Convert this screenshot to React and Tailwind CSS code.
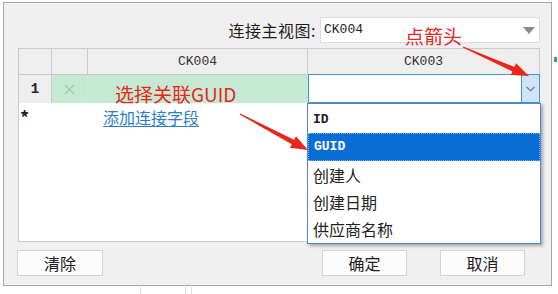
import React from "react";

function arrowPts(x1, y1, x2, y2, headLen = 17, headW = 13, neckW = 5, tailW = 1.2) {
  const dx = x2 - x1, dy = y2 - y1;
  const len = Math.hypot(dx, dy);
  const ux = dx / len, uy = dy / len;
  const px = -uy, py = ux;
  const bx = x2 - ux * headLen, by = y2 - uy * headLen;
  const pts = [
    [x1 + px * tailW / 2, y1 + py * tailW / 2],
    [bx + px * neckW / 2, by + py * neckW / 2],
    [bx + px * headW / 2, by + py * headW / 2],
    [x2, y2],
    [bx - px * headW / 2, by - py * headW / 2],
    [bx - px * neckW / 2, by - py * neckW / 2],
    [x1 - px * tailW / 2, y1 - py * tailW / 2],
  ];
  return pts.map((p) => p[0].toFixed(1) + "," + p[1].toFixed(1)).join(" ");
}

const cjk = "font-['Noto_Sans_CJK_SC','Noto_Sans',sans-serif]";
const mono = "font-['Liberation_Mono','Noto_Sans_CJK_SC',monospace]";

export default function App() {
  return (
    <div className={`relative w-[558px] h-[294px] bg-white overflow-hidden ${cjk}`}>
      <div className="ml-[3px] mt-[2px] w-[549px] h-[284px] border border-[#a8a8a8] bg-[#f0f0f0] flex flex-col pl-[14px] pr-[11px] pt-[14px]">
        {/* top row */}
        <div className="flex justify-end items-center gap-[4px] h-[26px]">
          <span className="text-[16px] leading-none text-[#1e1e1e] tracking-[0.5px]">连接主视图:</span>
          <div className="w-[220px] h-[26px] bg-white border border-[#dcdcdc] flex items-center justify-between pl-[3px] pr-[4px]">
            <span className={`${mono} text-[13px] text-[#222]`}>CK004</span>
            <svg width="12" height="7" viewBox="0 0 12 7">
              <polygon points="0,0 12,0 6,7" fill="#8a8a8a" />
            </svg>
          </div>
        </div>

        {/* grid */}
        <div className="mt-[5px] w-[522px] h-[194px] border border-[#c9c9c9] bg-white flex flex-col">
          <div className="grid grid-cols-[33px_36px_220px_231px] h-[26px] bg-[#eeeeee] border-b border-[#c9c9c9]">
            <div className="border-r border-[#c9c9c9]" />
            <div className="border-r border-[#c9c9c9]" />
            <div className={`border-r border-[#c9c9c9] flex items-center justify-center ${mono} text-[13px] text-[#333]`}>CK004</div>
            <div className={`flex items-center justify-center ${mono} text-[13px] text-[#333]`}>CK003</div>
          </div>
          <div className="grid grid-cols-[33px_36px_220px_231px] h-[28px] border-b border-[#c9c9c9]">
            <div className={`border-r border-[#c9c9c9] bg-[#eeeeee] flex items-center justify-center ${mono} text-[14px] font-bold text-[#222]`}>1</div>
            <div className="border-r border-[#d5e5db] bg-[#c6e9d4] flex items-center justify-center">
              <svg width="11" height="11" viewBox="0 0 11 11">
                <path d="M1 1 L10 10 M10 1 L1 10" stroke="#a9c4b4" strokeWidth="1.3" />
              </svg>
            </div>
            <div className="bg-[#c6e9d4]" />
            <div className="-mt-[1px] h-[29px] -mr-[1px] border border-[#4b8fd6] bg-white flex justify-end">
              <div className="w-[18px] h-full bg-[#cfe4f6] border-l border-[#4b8fd6] flex items-center justify-center">
                <svg width="9" height="6" viewBox="0 0 9 6">
                  <polyline points="0.5,0.8 4.5,4.8 8.5,0.8" fill="none" stroke="#55708c" strokeWidth="1.1" />
                </svg>
              </div>
            </div>
          </div>
          <div className="flex items-center h-[28px]">
            <span className="w-[33px] pl-[1px] text-[18px] leading-none font-bold text-[#222]">*</span>
            <span className="ml-[51px] text-[16px] leading-none text-[#2b7fc7] underline underline-offset-2">添加连接字段</span>
          </div>
        </div>

        {/* buttons */}
        <div className="mt-[8px] flex items-center h-[26px]">
          <div className="ml-[-1px] w-[86px] h-[26px] bg-[#fcfcfc] border border-[#d3d3d3] flex items-center justify-center text-[16px] text-[#1c1c1c]">清除</div>
          <div className="ml-auto w-[85px] h-[26px] bg-[#fcfcfc] border border-[#d3d3d3] flex items-center justify-center text-[16px] text-[#1c1c1c]">确定</div>
          <div className="ml-[33px] mr-[15px] w-[85px] h-[26px] bg-[#fcfcfc] border border-[#d3d3d3] flex items-center justify-center text-[16px] text-[#1c1c1c]">取消</div>
        </div>
      </div>

      {/* faint marks below panel */}
      <div className="absolute left-[140px] top-[287px] w-[1px] h-[7px] bg-[#dcdcdc]" />
      <div className="absolute left-[185px] top-[287px] w-[1px] h-[7px] bg-[#dcdcdc]" />
      <div className="absolute left-[191px] top-[287px] w-[1px] h-[7px] bg-[#dcdcdc]" />
      <div className="absolute left-[554px] top-[57px] w-[3px] h-[5px] bg-[#3aa86b]" />

      {/* dropdown list */}
      <div className="absolute left-[307px] top-[103px] w-[234px] h-[141px] bg-white border border-[#4a88cf] shadow-[2px_2px_3px_rgba(0,0,0,0.3)] pt-[2px] flex flex-col">
        <div className={`h-[27px] flex items-center pl-[5px] ${mono} font-bold text-[13px] text-[#222]`}>ID</div>
        <div className={`h-[28px] flex items-center pl-[5px] bg-[#0a6dd5] text-white ${mono} font-bold text-[13px] border border-dotted border-[#7fb0e8]`}>GUID</div>
        <div className="h-[27px] flex items-center pl-[5px] text-[16px] text-[#222]">创建人</div>
        <div className="h-[27px] flex items-center pl-[5px] text-[16px] text-[#222]">创建日期</div>
        <div className="h-[27px] flex items-center pl-[5px] text-[16px] text-[#222]">供应商名称</div>
      </div>

      {/* annotations */}
      <div className="absolute left-[405px] top-[26px] text-[19px] leading-none text-[#e8261c]">点箭头</div>
      <div className="absolute left-[115px] top-[84px] text-[19px] leading-none text-[#e8261c]">选择关联GUID</div>
      <svg className="absolute left-0 top-0 pointer-events-none" width="558" height="294">
        <polygon points={arrowPts(463, 47, 529, 76)} fill="#e8261c" />
        <polygon points={arrowPts(240, 114, 308, 150)} fill="#e8261c" />
      </svg>
    </div>
  );
}
